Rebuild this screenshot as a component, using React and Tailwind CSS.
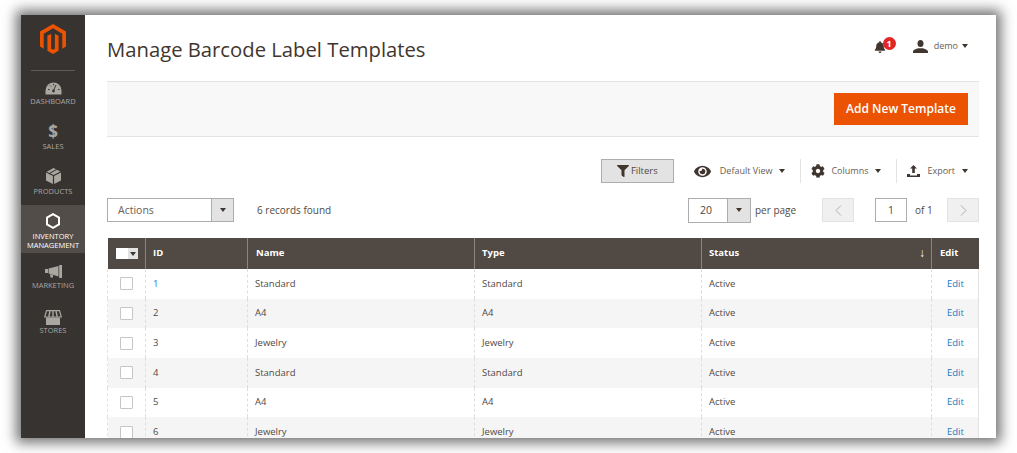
import React from "react";
import { FaMagento, FaBell, FaFilter, FaEye, FaCog } from "react-icons/fa";

const rows = [
  [1, "Standard"],
  [2, "A4"],
  [3, "Jewelry"],
  [4, "Standard"],
  [5, "A4"],
  [6, "Jewelry"],
];

const Caret = ({ className = "" }) => (
  <span className={`inline-block w-0 h-0 border-x-[3.5px] border-x-transparent border-t-[4px] border-t-[#41362f] ${className}`} />
);

function NavItem({ icon, label, active, h, lh = "leading-[11px]" }) {
  return (
    <div className={`flex flex-col items-center justify-start ${h} ${active ? "text-white" : "text-[#aaa6a0]"}`}>
      <div className="h-[18px] flex items-center justify-center">{icon}</div>
      <div className={`text-[7.5px] ${lh} uppercase text-center whitespace-nowrap`}>{label}</div>
    </div>
  );
}

const Hexagon = () => (
  <svg width="14" height="16" viewBox="0 0 14 16" fill="none" stroke="#fff" strokeWidth="2">
    <path d="M7 1.2 13 4.6v6.8L7 14.8 1 11.4V4.6Z" />
  </svg>
);

const Gauge = () => (
  <svg width="17" height="14" viewBox="0 0 17 14">
    <path d="M.5 13.5V9.5a8 8 0 0 1 16 0v4Z" fill="#aaa6a0" />
    <path d="M8.5 9.5 11 4M3 8.5h1.6M13 8.5h1.6M5 4.5l1 1M8.5 2.8v1.5" stroke="#373330" strokeWidth="1" fill="none" />
    <circle cx="8.5" cy="10" r="1.4" fill="#373330" />
  </svg>
);

const Box = () => (
  <svg width="15" height="16" viewBox="0 0 15 16" fill="#aaa6a0">
    <path d="M0 4.4 6.9 8v8L0 12.4Z" />
    <path d="M15 4.4 8.1 8v8l6.9-3.6Z" />
    <path d="M7.5 0 10 1.3 3.2 5 .8 3.7Z" />
    <path d="M11 1.8 14.2 3.6 7.5 7 4.3 5.4Z" />
  </svg>
);

const Megaphone = () => (
  <svg width="17" height="13" viewBox="0 0 17 13" fill="#aaa6a0">
    <path d="M0 4h3v4H0Z" />
    <path d="M3.6 3.6 13.5 1v10.5L3.6 8.6Z" />
    <path d="M14.2 0H17v13h-2.8Z" />
    <path d="M5 9.3 8 10v2.6H5.6Z" />
  </svg>
);

const Store = () => (
  <svg width="18" height="15" viewBox="0 0 18 15" fill="none">
    <path d="M2.5.7h13L17.3 7H.7Z" stroke="#aaa6a0" strokeWidth="1.2" />
    <path d="M6 1 4.8 7M9 1v6M12 1l1.2 6" stroke="#aaa6a0" strokeWidth="1.4" />
    <path d="M2 7.5h14V15H2Z" fill="#aaa6a0" />
  </svg>
);

const User = () => (
  <svg width="15" height="13" viewBox="0 0 15 13" fill="#41362f">
    <ellipse cx="7.5" cy="3.5" rx="3" ry="3.5" />
    <path d="M0 13v-1.6c0-1.6 3-2.4 5.4-3.2h4.2C12 9 15 9.8 15 11.4V13Z" />
  </svg>
);

const Chevron = ({ d }) => (
  <svg width="7" height="11" viewBox="0 0 7 11" fill="none" stroke="#adadad" strokeWidth="1">
    <path d={d} />
  </svg>
);

export default function App() {
  return (
    <div className="w-[1017px] h-[453px] bg-white overflow-hidden pl-[21px] pt-[15px] font-['Open_Sans',sans-serif]">
      <div className="w-[975px] h-[423px] flex overflow-hidden bg-white shadow-[0_0_12px_5px_rgba(0,0,0,0.55)]">
        <aside className="w-[64px] shrink-0 bg-[#373330] flex flex-col">
          <div className="h-[40px] mt-[9px] flex justify-center items-start text-[#eb5202]">
            <FaMagento size={30} />
          </div>
          <div className="mx-[10px] mt-[6px] h-px bg-[#5f5a55]" />
          <div className="mt-[8px] flex flex-col">
            <NavItem h="h-[43px]" lh="leading-[11px] -mt-[1px]" label="Dashboard" icon={<Gauge />} />
            <NavItem h="h-[45px]" lh="leading-[11px] mt-[1px]" label="Sales" icon={<span className="font-bold text-[17px] leading-[17px]">$</span>} />
            <NavItem h="h-[38px]" lh="leading-[11px] mt-[1px]" label="Products" icon={<Box />} />
            <div className="bg-[#524d49] pt-[7px] h-[48px]">
              <NavItem h="h-[41px]" active lh="leading-[9px] pt-[2px]" label={<>Inventory<br />Management</>} icon={<Hexagon />} />
            </div>
            <div className="mt-[9px]">
              <NavItem h="h-[46px]" label="Marketing" icon={<Megaphone />} />
            </div>
            <NavItem h="h-[45px]" lh="leading-[11px] -mt-[1px]" label="Stores" icon={<Store />} />
          </div>
        </aside>

        <main className="flex-1 pl-[22px] pr-[17px] min-w-0">
          <header className="h-[66px] flex items-center justify-between">
            <h1 className="text-[20.25px] text-[#41362f] leading-none mt-[3px]">Manage Barcode Label Templates</h1>
            <div className="flex items-center mt-[-4px] pr-[11px]">
              <div className="relative mr-[27px] text-[#41362f]">
                <FaBell size={12} className="mt-[2px]" />
                <span className="absolute -top-[2px] left-[9px] w-[13px] h-[13px] rounded-full bg-[#e22626] text-white text-[9px] font-bold leading-[13px] text-center">1</span>
              </div>
              <User />
              <span className="ml-[6px] text-[9px] text-[#676056] mr-[4px]">demo</span>
              <Caret />
            </div>
          </header>

          <div className="h-[56px] bg-[#f8f8f8] border-y border-[#e3e3e3] flex items-center justify-end pr-[11px]">
            <button className="w-[134px] h-[32px] bg-[#eb5202] text-white text-[12px] font-semibold">Add New Template</button>
          </div>

          <div className="mt-[21px] h-[26px] flex items-center justify-end pr-[11px]">
            <button className="w-[73px] h-[24px] bg-[#e3e3e3] border border-[#adadad] flex items-center justify-center gap-[2px] text-[#514943] text-[9.5px] font-medium mr-[20px]">
              <FaFilter size={12} className="text-[#41362f]" />Filters
            </button>
            <FaEye size={17} className="text-[#41362f] mr-[9px]" />
            <span className="text-[9px] text-[#676056] mr-[7px]">Default View</span>
            <Caret className="mr-[15px]" />
            <span className="w-px h-[24px] bg-[#e3e3e3] mr-[10px]" />
            <FaCog size={14} className="text-[#41362f] mr-[6px]" />
            <span className="text-[9px] text-[#676056] mr-[7px]">Columns</span>
            <Caret className="mr-[15px]" />
            <span className="w-px h-[24px] bg-[#e3e3e3] mr-[10px]" />
            <svg width="13" height="12" viewBox="0 0 13 12" fill="#41362f" className="mr-[7px]">
              <path d="M6.5 0 10 3.6H7.8V8H5.2V3.6H3Z" />
              <path d="M0 9h3v1.4h7V9h3v3H0Z" />
            </svg>
            <span className="text-[9px] text-[#676056] mr-[7px]">Export</span>
            <Caret />
          </div>

          <div className="mt-[14px] h-[24px] flex items-center">
            <div className="w-[127px] h-[24px] border border-[#adadad] flex bg-white">
              <span className="flex-1 pl-[10px] text-[10.5px] leading-[22px] text-[#676056]">Actions</span>
              <span className="w-[22px] bg-[#e3e3e3] border-l border-[#adadad] flex items-center justify-center"><Caret /></span>
            </div>
            <span className="ml-[23px] text-[10px] text-[#514943]">6 records found</span>
            <div className="ml-auto flex items-center">
              <div className="w-[63px] h-[25px] border border-[#adadad] flex bg-white">
                <span className="flex-1 pl-[11px] text-[10.5px] leading-[23px] text-[#514943]">20</span>
                <span className="w-[23px] bg-[#e3e3e3] border-l border-[#adadad] flex items-center justify-center"><Caret /></span>
              </div>
              <span className="ml-[4px] w-[42px] whitespace-nowrap text-[10px] text-[#514943]">per page</span>
              <button className="ml-[25px] w-[32px] h-[24px] bg-[#f0f0f0] border border-[#e3e3e3] flex items-center justify-center"><Chevron d="M6 .5 1 5.5l5 5" /></button>
              <div className="ml-[21px] w-[32px] h-[24px] border border-[#adadad] text-center text-[10.5px] leading-[22px] text-[#514943]">1</div>
              <span className="ml-[8px] w-[18px] whitespace-nowrap text-[10px] text-[#514943]">of 1</span>
              <button className="ml-[14px] w-[32px] h-[24px] bg-[#f0f0f0] border border-[#e3e3e3] flex items-center justify-center"><Chevron d="M1 .5l5 5-5 5" /></button>
            </div>
          </div>

          <table className="mt-[16px] w-[871px] table-fixed border-collapse text-[9.5px]">
            <colgroup>
              <col className="w-[38px]" />
              <col className="w-[102px]" />
              <col className="w-[227px]" />
              <col className="w-[227px]" />
              <col className="w-[230px]" />
              <col className="w-[47px]" />
            </colgroup>
            <thead>
              <tr className="h-[31px] bg-[#514943] text-white font-bold text-left">
                <th className="border-r border-[#8a837e] pl-[8px]">
                  <div className="flex h-[11px] w-[22px]">
                    <span className="w-[12px] bg-white" />
                    <span className="w-[10px] bg-[#e3e3e3] flex items-center justify-center"><Caret /></span>
                  </div>
                </th>
                <th className="border-r border-[#8a837e] pl-[7px] pb-[1px]">ID</th>
                <th className="border-r border-[#8a837e] pl-[8px] pb-[1px]">Name</th>
                <th className="border-r border-[#8a837e] pl-[7px] pb-[1px]">Type</th>
                <th className="border-r border-[#8a837e] pl-[7px] pb-[1px]">
                  <div className="flex justify-between items-center pr-[6px]"><span>Status</span><span className="font-normal text-[12px] leading-none">↓</span></div>
                </th>
                <th className="pl-[8px] pb-[1px]">Edit</th>
              </tr>
            </thead>
            <tbody className="text-[#514943]">
              {rows.map(([id, n], i) => (
                <tr key={id} className={`h-[29.7px] ${i % 2 ? "bg-[#f5f5f5]" : "bg-white"}`}>
                  <td className="border-l border-r border-l-[#e3e3e3] border-r-[#dedede] border-dashed pl-[12px]">
                    <span className="block w-[13px] h-[13px] bg-white border border-[#c6c6c6] rounded-[1px]" />
                  </td>
                  <td className={`border-r border-dashed border-[#dedede] pl-[7px] ${i === 0 ? "text-[#1979c3]" : ""}`}>{id}</td>
                  <td className="border-r border-dashed border-[#dedede] pl-[7px]">{n}</td>
                  <td className="border-r border-dashed border-[#dedede] pl-[7px]">{n}</td>
                  <td className="border-r border-dashed border-[#dedede] pl-[7px]">Active</td>
                  <td className="border-r border-r-[#e3e3e3] pl-[15px] text-[#1979c3]">Edit</td>
                </tr>
              ))}
            </tbody>
          </table>
        </main>
      </div>
    </div>
  );
}
